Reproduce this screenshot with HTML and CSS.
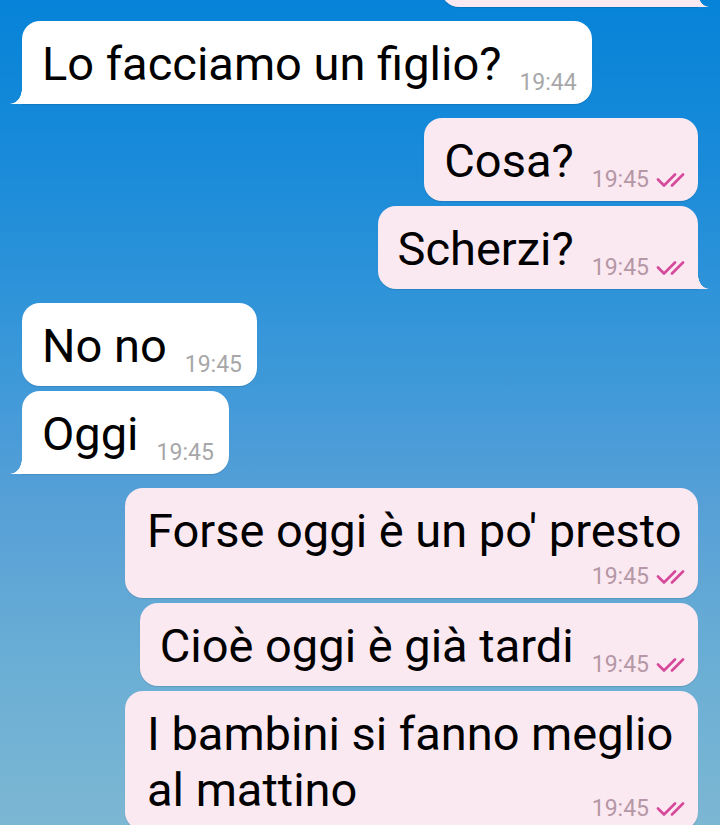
FILE: index.html
```html
<!DOCTYPE html>
<html lang="it">
  <head>
    <meta charset="UTF-8" />
    <meta name="viewport" content="width=device-width, initial-scale=1.0" />
    <title>Chat</title>
    <link rel="stylesheet" href="styles.css">
  </head>
  <body>
    <div class="chat">
      <div class="group out-group">
        <div class="bubble out tail partial"></div>
      </div>

      <div class="group in-group">
        <div class="bubble in tail">
          <p class="text">Lo facciamo un figlio?</p>
          <span class="meta"><span class="time">19:44</span></span>
        </div>
      </div>

      <div class="group out-group">
        <div class="bubble out">
          <p class="text">Cosa?</p>
          <span class="meta">
            <span class="time">19:45</span>
            <svg class="checks" viewBox="0 0 32 14"><path d="M2 6.5 L8 12.5 L19 1.5 M16 12.5 L27 1.5" /></svg>
          </span>
        </div>
        <div class="bubble out tail">
          <p class="text">Scherzi?</p>
          <span class="meta">
            <span class="time">19:45</span>
            <svg class="checks" viewBox="0 0 32 14"><path d="M2 6.5 L8 12.5 L19 1.5 M16 12.5 L27 1.5" /></svg>
          </span>
        </div>
      </div>

      <div class="group in-group">
        <div class="bubble in">
          <p class="text">No no</p>
          <span class="meta"><span class="time">19:45</span></span>
        </div>
        <div class="bubble in tail">
          <p class="text">Oggi</p>
          <span class="meta"><span class="time">19:45</span></span>
        </div>
      </div>

      <div class="group out-group">
        <div class="bubble out stack">
          <p class="text">Forse oggi è un po' presto</p>
          <span class="meta">
            <span class="time">19:45</span>
            <svg class="checks" viewBox="0 0 32 14"><path d="M2 6.5 L8 12.5 L19 1.5 M16 12.5 L27 1.5" /></svg>
          </span>
        </div>
        <div class="bubble out">
          <p class="text">Cioè oggi è già tardi</p>
          <span class="meta">
            <span class="time">19:45</span>
            <svg class="checks" viewBox="0 0 32 14"><path d="M2 6.5 L8 12.5 L19 1.5 M16 12.5 L27 1.5" /></svg>
          </span>
        </div>
        <div class="bubble out stack overlap">
          <p class="text">I bambini si fanno meglio al mattino</p>
          <span class="meta">
            <span class="time">19:45</span>
            <svg class="checks" viewBox="0 0 32 14"><path d="M2 6.5 L8 12.5 L19 1.5 M16 12.5 L27 1.5" /></svg>
          </span>
        </div>
      </div>
    </div>
  </body>
</html>
```

FILE: styles.css
```css
* {
  margin: 0;
  padding: 0;
  box-sizing: border-box;
}

html,
body {
  height: 825px;
  overflow: hidden;
}

body {
  font-family: Roboto, 'Noto Sans', sans-serif;
  background: linear-gradient(
    180deg,
    #0683d8 0%,
    #1a8bd9 20%,
    #3897d9 42%,
    #559fd7 60%,
    #6aaed5 80%,
    #7cb7d3 100%
  );
  color: #000;
}

.chat {
  display: flex;
  flex-direction: column;
  gap: 14px;
  padding: 0 22px;
}

.group {
  display: flex;
  flex-direction: column;
  gap: 5px;
}

.in-group {
  align-items: flex-start;
}

.out-group {
  align-items: flex-end;
}

/* bubbles */
.bubble {
  position: relative;
  display: flex;
  align-items: flex-end;
  max-width: 573px;
  padding: 15px 15px 12px 20px;
  border-radius: 18px;
  box-shadow: 0 1px 1px rgba(0, 0, 0, 0.12);
}

.in {
  background: #fff;
}

.out {
  background: #fbe9f2;
  padding-right: 10px;
}

.text {
  font-size: 47px;
  line-height: 56px;
  font-weight: 400;
}

.meta {
  display: flex;
  align-items: center;
  gap: 7px;
  margin-left: 18px;
  margin-bottom: -2px;
  flex-shrink: 0;
}

.time {
  font-size: 23px;
  line-height: 23px;
  color: #a7a7a9;
}

.out .time {
  color: #b597a5;
}

.checks {
  width: 32px;
  height: 14px;
  fill: none;
  stroke: #d6489a;
  stroke-width: 2.6;
  stroke-linecap: round;
  stroke-linejoin: round;
}

/* long messages: time sits on its own row, right aligned */
.stack {
  flex-direction: column;
  align-items: stretch;
  width: 573px;
  padding-left: 22px;
}

.stack .meta {
  justify-content: flex-end;
  margin-top: 6px;
}

.overlap .meta {
  margin-top: -21px;
}

/* tails */
.in.tail {
  border-bottom-left-radius: 0;
}

.in.tail::before {
  content: '';
  position: absolute;
  left: -12px;
  bottom: 0;
  width: 12px;
  height: 15px;
  background: radial-gradient(12px 15px at 0 0, transparent 96%, #fff 100%);
}

.out.tail {
  border-bottom-right-radius: 0;
}

.out.tail::after {
  content: '';
  position: absolute;
  right: -11px;
  bottom: 0;
  width: 11px;
  height: 14px;
  background: radial-gradient(11px 14px at 100% 0, transparent 96%, #fbe9f2 100%);
}

.partial {
  width: 257px;
  height: 83px;
  margin-top: -76px;
}
```
